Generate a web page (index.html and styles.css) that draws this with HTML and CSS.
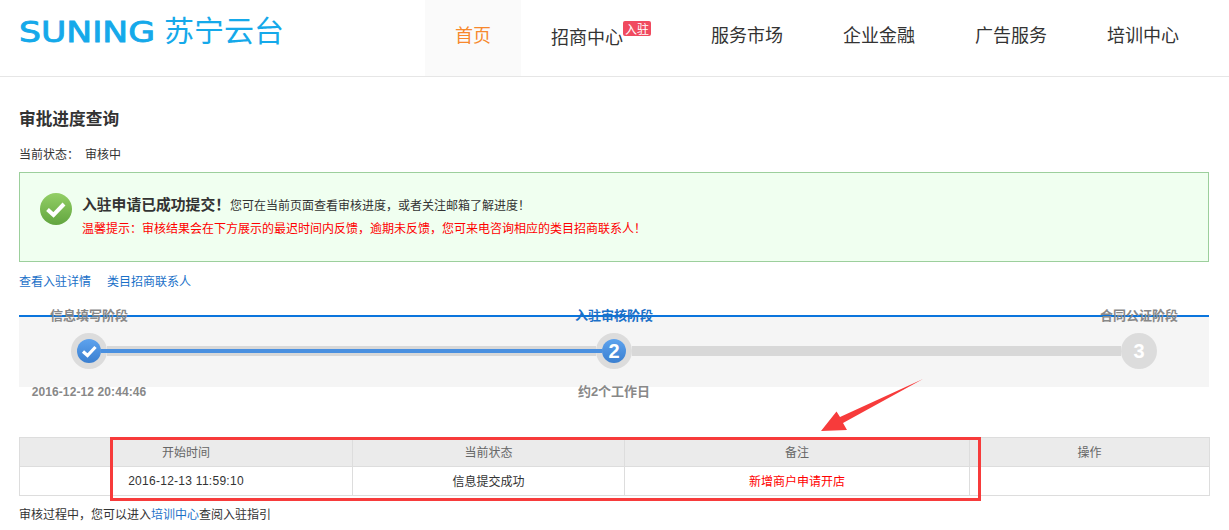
FILE: index.html
```html
<!DOCTYPE html>
<html lang="zh-CN">
<head>
<meta charset="utf-8">
<title>审批进度查询</title>
<link rel="stylesheet" href="styles.css">
</head>
<body>
<header class="topbar">
  <svg class="logo" width="280" height="56" viewBox="0 0 280 56">
    <text class="logo-en" x="0" y="30" textLength="136" lengthAdjust="spacingAndGlyphs">SUNING</text>
    <text class="logo-cn" x="145" y="30" textLength="120" lengthAdjust="spacingAndGlyphs">苏宁云台</text>
  </svg>
  <nav class="nav">
    <a class="nav-item nav-active">首页</a>
    <a class="nav-item nav-badged"><span class="nav-label">招商中心</span><span class="badge">入驻</span></a>
    <a class="nav-item">服务市场</a>
    <a class="nav-item">企业金融</a>
    <a class="nav-item">广告服务</a>
    <a class="nav-item">培训中心</a>
  </nav>
</header>
<main class="main">
  <h1 class="title">审批进度查询</h1>
  <p class="status"><span class="status-key">当前状态：</span><span>审核中</span></p>
  <section class="alert">
    <svg class="alert-icon" width="34" height="34" viewBox="0 0 34 34">
      <defs>
        <linearGradient id="greenGrad" x1="0" y1="0" x2="0" y2="1">
          <stop offset="0" stop-color="#93cf66"/>
          <stop offset="1" stop-color="#62a53f"/>
        </linearGradient>
      </defs>
      <circle cx="17" cy="17" r="16" fill="url(#greenGrad)"/>
      <path d="M8.5 17.5l6 5.5 10.5-11" fill="none" stroke="#fff" stroke-width="4"/>
    </svg>
    <div class="alert-body">
      <p class="alert-line"><strong class="alert-head">入驻申请已成功提交！</strong>您可在当前页面查看审核进度，或者关注邮箱了解进度！</p>
      <p class="alert-warn">温馨提示：审核结果会在下方展示的最迟时间内反馈，逾期未反馈，您可来电咨询相应的类目招商联系人！</p>
    </div>
  </section>
  <div class="links"><a class="link">查看入驻详情</a><a class="link">类目招商联系人</a></div>
  <section class="stepper">
    <div class="step-labels">
      <span class="step-label">信息填写阶段</span>
      <span class="step-label step-label-on">入驻审核阶段</span>
      <span class="step-label">合同公证阶段</span>
    </div>
    <div class="track">
      <span class="node"><span class="dot dot-on">
        <svg width="24" height="24" viewBox="0 0 24 24"><path d="M6 12.5l4.5 4 8-8.5" fill="none" stroke="#fff" stroke-width="3.2"/></svg>
      </span></span>
      <span class="bar"><span class="bar-fill"></span></span>
      <span class="node"><span class="dot dot-on">2</span></span>
      <span class="bar"></span>
      <span class="node node-off">3</span>
    </div>
  </section>
  <div class="step-times">
    <span class="step-time step-time-date">2016-12-12 20:44:46</span>
    <span class="step-time">约2个工作日</span>
    <span class="step-time"></span>
  </div>
  <table class="log">
    <colgroup><col class="col-a"><col class="col-b"><col class="col-c"><col class="col-d"></colgroup>
    <thead><tr><th>开始时间</th><th>当前状态</th><th>备注</th><th>操作</th></tr></thead>
    <tbody><tr><td class="cell-date">2016-12-13 11:59:10</td><td>信息提交成功</td><td class="cell-red">新增商户申请开店</td><td></td></tr></tbody>
  </table>
  <p class="note">审核过程中，您可以进入<a class="note-link">培训中心</a>查阅入驻指引</p>
</main>
<div class="mark-box"></div>
<svg class="mark-arrow" width="1229" height="530" viewBox="0 0 1229 530">
  <polygon points="821,431 836.5,411.5 840,417 923,379 843,423 847,430" fill="#f73b3b"/>
</svg>
</body>
</html>
```
FILE: styles.css
```css
* { box-sizing: border-box; }
html, body { margin: 0; padding: 0; }
body {
  position: relative;
  height: 530px;
  overflow: hidden;
  background: #fff;
  color: #333;
  font-family: "Liberation Sans", "Noto Sans CJK SC", sans-serif;
  font-size: 12px;
}
p, h1 { margin: 0; }

.topbar {
  display: flex;
  height: 77px;
  border-bottom: 1px solid #e6e6e6;
  padding-left: 19px;
}
.logo { margin-top: 12px; flex: none; }
.logo-en { font-family: "DejaVu Sans", sans-serif; font-size: 29px; fill: #15a9ea; stroke: #15a9ea; stroke-width: 0.9px; }
.logo-cn { font-family: "Noto Sans CJK SC", sans-serif; font-size: 29px; font-weight: 400; fill: #15a9ea; }
.nav { display: flex; margin-left: 126px; }
.nav-item {
  display: flex;
  align-items: center;
  padding: 0 30px 8px;
  color: #333;
  font-family: "Noto Sans CJK SC", sans-serif;
  font-size: 18px;
  line-height: 26px;
}
.nav-active { background: #fafafa; color: #f7882c; }
.nav-badged { padding-bottom: 4px; align-items: center; }
.badge {
  align-self: flex-start;
  width: 28px;
  height: 15px;
  margin-top: 21px;
  border-radius: 2px;
  background: #f04a5f;
  color: #fff;
  font-size: 12px;
  line-height: 15px;
  text-align: center;
}

.main { width: 1190px; margin-left: 19px; }
.title {
  height: 24px;
  margin-top: 29px;
  color: #333;
  font-family: "Noto Sans CJK SC", sans-serif;
  font-size: 16.7px;
  font-weight: 700;
  line-height: 24px;
}
.status { display: flex; height: 18px; margin-top: 15px; line-height: 18px; font-family: "Noto Sans CJK SC", sans-serif; }
.status-key { width: 66px; }

.alert {
  display: flex;
  height: 90px;
  margin-top: 9px;
  padding: 19px 0 0 19px;
  border: 1px solid #9ccf9c;
  background: #f0fff0;
}
.alert-icon { flex: none; }
.alert-body { margin-left: 9px; font-family: "Noto Sans CJK SC", sans-serif; }
.alert-line { height: 25px; line-height: 23px; white-space: nowrap; }
.alert-head { font-size: 14.8px; font-weight: 700; }
.alert-warn { color: #f00; line-height: 22px; white-space: nowrap; }

.links { display: flex; gap: 16px; height: 18px; margin-top: 10px; line-height: 18px; font-family: "Noto Sans CJK SC", sans-serif; }
.link { color: #1a70c8; }

.stepper { height: 72px; border-top: 2px solid #0a75dd; background: #f5f5f5; margin-top: 25px; }
.step-labels { display: flex; justify-content: space-between; height: 18px; margin-top: -11px; }
.step-label {
  width: 140px;
  color: #888;
  font-family: "Noto Sans CJK SC", sans-serif;
  font-size: 13px;
  font-weight: 700;
  line-height: 18px;
  text-align: center;
}
.step-label-on { color: #1a70c8; }
.track { display: flex; align-items: center; height: 36px; margin-top: 9px; padding: 0 52px; }
.node {
  display: flex;
  flex: none;
  align-items: center;
  justify-content: center;
  width: 36px;
  height: 36px;
  border-radius: 50%;
  background: #dcdcdc;
}
.node-off { color: #fff; font-size: 20px; font-weight: 700; }
.dot {
  display: flex;
  position: relative;
  z-index: 2;
  align-items: center;
  justify-content: center;
  width: 24px;
  height: 24px;
  border-radius: 50%;
  background: linear-gradient(#5ea3ee, #3a7fd0);
  color: #fff;
  font-size: 20px;
  font-weight: 700;
}
.bar { display: flex; flex: 1; align-items: center; height: 10px; background: #d8d8d8; }
.bar-fill {
  position: relative;
  z-index: 1;
  flex: none;
  width: calc(100% + 12px);
  height: 4px;
  margin-left: -6px;
  background: #4a90e0;
}

.step-times { display: flex; justify-content: space-between; height: 18px; margin-top: -4px; }
.step-time {
  width: 140px;
  color: #888;
  font-family: "Liberation Sans", "Noto Sans CJK SC", sans-serif;
  font-size: 13px;
  font-weight: 700;
  line-height: 18px;
  text-align: center;
}
.step-time-date { font-size: 12px; letter-spacing: 0.1px; }

.log { width: 1190px; margin-top: 36px; border-collapse: collapse; table-layout: fixed; }
.col-a { width: 333px; }
.col-b { width: 272px; }
.col-c { width: 345px; }
.col-d { width: 240px; }
.log th, .log td {
  height: 29px;
  padding: 0 0 2px;
  border: 1px solid #ddd;
  font-family: "Noto Sans CJK SC", sans-serif;
  font-size: 12px;
  font-weight: 400;
  text-align: center;
}
.log th { background: #ebebeb; color: #666; }
.log td { color: #333; }
.log .cell-date { padding: 0; font-family: "Liberation Sans", sans-serif; letter-spacing: 0.27px; }
.log .cell-red { color: #f00; }

.note { height: 18px; margin-top: 9px; line-height: 18px; font-family: "Noto Sans CJK SC", sans-serif; }
.note-link { color: #1a70c8; }

.mark-box {
  position: absolute;
  left: 110px;
  top: 437px;
  width: 871px;
  height: 64px;
  border: 3px solid #f73b3b;
}
.mark-arrow { position: absolute; left: 0; top: 0; pointer-events: none; }
```
